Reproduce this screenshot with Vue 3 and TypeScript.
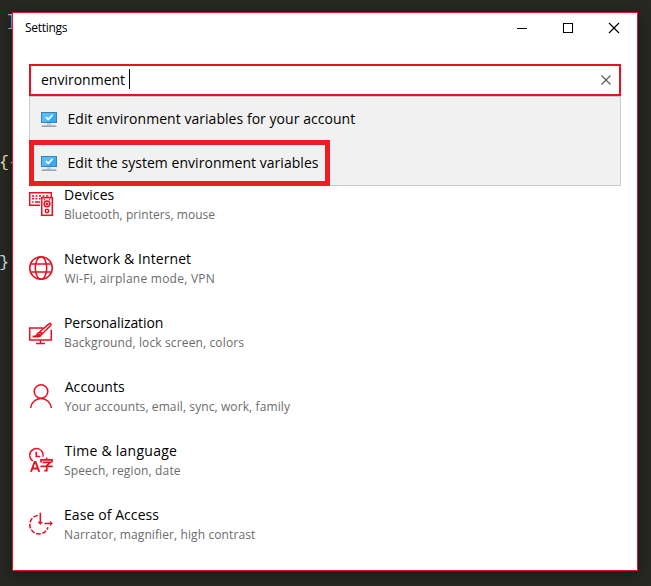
<script setup lang="ts">
import { ref } from 'vue'

interface Category {
  id: string
  title: string
  detail: string
}

const query = ref('environment')

const suggestions = [
  { id: 'user', label: 'Edit environment variables for your account', marked: false },
  { id: 'system', label: 'Edit the system environment variables', marked: true },
]

const categories: Category[] = [
  { id: 'devices', title: 'Devices', detail: 'Bluetooth, printers, mouse' },
  { id: 'network', title: 'Network & Internet', detail: 'Wi-Fi, airplane mode, VPN' },
  { id: 'personalization', title: 'Personalization', detail: 'Background, lock screen, colors' },
  { id: 'accounts', title: 'Accounts', detail: 'Your accounts, email, sync, work, family' },
  { id: 'time', title: 'Time & language', detail: 'Speech, region, date' },
  { id: 'ease', title: 'Ease of Access', detail: 'Narrator, magnifier, high contrast' },
]
</script>

<template>
  <div class="desktop">
    <span class="code code-top">]</span>
    <span class="code code-open">{-</span>
    <span class="code code-close">}</span>

    <main class="window">
      <header class="titlebar">
        <span class="caption">Settings</span>
        <div class="controls">
          <svg class="control" viewBox="0 0 46 30"><path d="M17 15.5h10" /></svg>
          <svg class="control" viewBox="0 0 46 30"><rect x="17.5" y="10.5" width="9" height="9" /></svg>
          <svg class="control smooth" viewBox="0 0 46 30"><path d="M17 10l10 10M27 10l-10 10" /></svg>
        </div>
      </header>

      <section class="search">
        <div class="field">
          <span class="query">{{ query }}</span>
          <i class="caret"></i>
          <svg class="clear" viewBox="0 0 10 10"><path d="M.5.5l9 9M9.5.5l-9 9" /></svg>
        </div>
        <ul class="suggestions">
          <li v-for="s in suggestions" :key="s.id" class="suggestion" :class="[s.id, { marked: s.marked }]">
            <svg class="monitor" viewBox="0 0 16 16">
              <path d="M6 11h4v2H6z" fill="#b9d3e2" />
              <path d="M1.500 13.200h13l1.500 1.800H0z" fill="#9aa9ba" />
              <rect x=".5" y=".5" width="15" height="10" fill="#35aaf8" stroke="#3b82ad" />
              <path d="M1 1h14L5 10H1z" fill="#57bbfc" />
              <path d="M5 5.200l2.300 2.300L11.600 3" fill="none" stroke="#fff" stroke-width="1.700" />
            </svg>
            <span class="label">{{ s.label }}</span>
          </li>
        </ul>
      </section>

      <ul class="categories">
        <li v-for="c in categories" :key="c.id" class="category" :class="c.id">
          <svg class="icon" viewBox="0 0 24 24">
            <g v-if="c.id === 'devices'">
              <path d="M11 13.200H.7V.8h21.600V5" />
              <path d="M3 4h2M6.500 4h2M10 4h2M13.500 4h2M17 4h2.500M3 6.800h2M6.500 6.800h2M10 6.800h1.500M3 10h1.500M6 10h5" stroke-width="1.600" />
              <rect x="12.700" y="5.700" width="10.600" height="17.600" />
              <circle cx="18" cy="11.800" r="2.900" />
              <circle cx="18" cy="11.800" r=".6" class="solid" />
              <circle cx="18" cy="18.900" r="1.700" />
              <path d="M15 7.800h1M20 7.800h1" />
            </g>
            <g v-else-if="c.id === 'network'">
              <circle cx="12" cy="12" r="11.300" />
              <ellipse cx="12" cy="12" rx="5.700" ry="11.300" />
              <path d="M1.500 8h21M1.500 16h21" />
            </g>
            <g v-else-if="c.id === 'personalization'" transform="translate(0 2.700)">
              <path d="M14.500 5.300H.7v12h21.600V7M11.500 17.500v3.300M7 20.800h9" />
              <path d="M20.300.9c1.100-.7 2.300.5 1.500 1.600L13.300 11l-2.200-2.200zM10.800 9l2.200 2.200M11 9.800c-2-.3-2.700 1-3.200 2.600-.3 1-.9 1.500-4.300 1.500h5.700c2.500 0 3.600-1.800 3-3.200z" />
              <path d="M10.300 11.600c-.8.300-1.200 1.400-2 2h1c1-.1 1.600-.8 1.600-1.500z" class="solid" />
            </g>
            <g v-else-if="c.id === 'accounts'">
              <circle cx="12" cy="7.500" r="6.800" />
              <path d="M1.700 24c.5-5.300 4.700-9.500 10.300-9.500S21.800 18.700 22.300 24" />
            </g>
            <g v-else-if="c.id === 'time'">
              <path d="M3.800 12.800A6.700 6.700 0 1 1 13.900 8.800M7.200 3.700v4.800h4" />
              <path d="M2 23.800L5.600 14h1L10.200 23.800M3.300 20.500h5.600" stroke-width="1.900" />
              <path d="M17.500 9.500v2M12 14.500v-2.700h11v2.700M13.500 14.300h8l-3.700 3.200v5.200h-2.500M11.500 18.300h12.300" stroke-width="1.700" />
            </g>
            <g v-else>
              <path d="M8.800 3.400A9.300 9.300 0 1 0 19 15.200" stroke-dasharray="4.700 1.500" />
              <path d="M11.300.8v11.500M15.500 11.400h7.500" />
              <path d="M9 10h4.600l-2.300 2.500zM21.200 9.200l2.300 2.200-2.300 2.200z" class="solid" stroke-width=".5" />
            </g>
          </svg>
          <div class="text">
            <span class="title">{{ c.title }}</span>
            <span class="detail">{{ c.detail }}</span>
          </div>
        </li>
      </ul>
    </main>
  </div>
</template>

<style>
body {
  margin: 0;
  background: #272822;
}
</style>

<style scoped>
.desktop {
  position: relative;
  box-sizing: border-box;
  width: 651px;
  height: 586px;
  padding: 12px 13px 15px 12px;
  overflow: hidden;
  background: #272822;
  font-family: "Open Sans", "Noto Sans", sans-serif;
}
.code {
  position: absolute;
  font: 17px/20px "Liberation Mono", monospace;
  color: #e6dfae;
}
.code-top { left: 6px; top: 12px; color: #a9c6dc; }
.code-open { left: -1px; top: 153px; letter-spacing: -1px; }
.code-close { left: -1px; top: 253px; color: #c4dce8; }
.window {
  position: relative;
  box-sizing: border-box;
  width: 626px;
  height: 559px;
  border: 1px solid #e81123;
  background: #fff;
  box-shadow: 0 3px 14px rgba(0, 0, 0, 0.4);
}
.titlebar {
  display: flex;
  justify-content: space-between;
  height: 30px;
  padding-left: 12px;
}
.caption {
  font-size: 12px;
  line-height: 30px;
  letter-spacing: -0.3px;
}
.controls {
  display: flex;
  margin-right: -1px;
}
.control {
  width: 46px;
  height: 30px;
  fill: none;
  stroke: #000;
  stroke-width: 1;
  shape-rendering: crispEdges;
}
.smooth {
  shape-rendering: auto;
  stroke-width: 1.2;
}
.search {
  position: relative;
  margin: 21px 16px 0;
}
.field {
  display: flex;
  align-items: center;
  box-sizing: border-box;
  height: 32px;
  padding: 0 8px 0 10px;
  border: 2px solid #e81123;
}
.query {
  font-size: 14px;
  line-height: 28px;
}
.caret {
  width: 1px;
  height: 20px;
  margin: -2px 0 0 4px;
  background: #000;
}
.clear {
  width: 10px;
  height: 10px;
  margin-left: auto;
  fill: none;
  stroke: #555;
  stroke-width: 1.1;
}
ul {
  margin: 0;
  padding: 0;
  list-style: none;
}
.suggestions {
  position: absolute;
  top: 32px;
  left: 0;
  right: 0;
  box-sizing: border-box;
  height: 90px;
  border: 1px solid #ccc;
  background: #f1f1f1;
}
.suggestion {
  display: flex;
  align-items: center;
  gap: 10.5px;
  box-sizing: border-box;
  height: 44px;
  padding-left: 11px;
}
.marked {
  width: 301px;
  height: 46px;
  margin: -1px 0 0 -1px;
  padding: 0 0 0 7px;
  border: 5px solid #f01c24;
}
.monitor {
  width: 16px;
  height: 16px;
  margin-top: 2px;
}
.label {
  font-size: 14px;
  line-height: 20px;
  letter-spacing: 0.04px;
  white-space: nowrap;
}
.categories {
  padding: 87px 0 0 16px;
}
.category {
  display: flex;
  gap: 11px;
  height: 64px;
}
.icon {
  width: 24px;
  height: 24px;
  margin-top: 9px;
  overflow: visible;
  fill: none;
  stroke: #e81123;
  stroke-width: 1.550;
}
.solid {
  fill: #e81123;
}
.text {
  display: flex;
  flex-direction: column;
  padding-top: 2px;
  white-space: nowrap;
}
.title {
  font-size: 14px;
  line-height: 20px;
  letter-spacing: 0.08px;
}
.detail {
  font-size: 12px;
  line-height: 19px;
  letter-spacing: 0.1px;
  color: #6b6b6b;
}
.network .detail {
  padding-left: 0.5px;
  letter-spacing: 0.25px;
}
.devices .detail {
  letter-spacing: 0.04px;
}
.personalization .title {
  letter-spacing: -0.07px;
}
.personalization .detail {
  letter-spacing: 0.13px;
}
.accounts .text {
  padding-left: 0.7px;
}
.time .title {
  padding-left: 0.5px;
  letter-spacing: 0.25px;
}
.time .detail {
  letter-spacing: 0.15px;
}
</style>
